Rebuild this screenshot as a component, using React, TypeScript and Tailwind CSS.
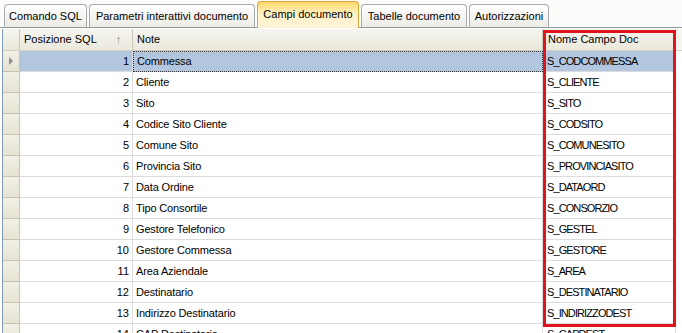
import React from "react";

const rows: [number, string, string][] = [
  [1, "Commessa", "S_CODCOMMESSA"],
  [2, "Cliente", "S_CLIENTE"],
  [3, "Sito", "S_SITO"],
  [4, "Codice Sito Cliente", "S_CODSITO"],
  [5, "Comune Sito", "S_COMUNESITO"],
  [6, "Provincia Sito", "S_PROVINCIASITO"],
  [7, "Data Ordine", "S_DATAORD"],
  [8, "Tipo Consortile", "S_CONSORZIO"],
  [9, "Gestore Telefonico", "S_GESTEL"],
  [10, "Gestore Commessa", "S_GESTORE"],
  [11, "Area Aziendale", "S_AREA"],
  [12, "Destinatario", "S_DESTINATARIO"],
  [13, "Indirizzo Destinatario", "S_INDIRIZZODEST"],
  [14, "CAP Destinatario", "S_CAPDEST"],
];

const tabs = [
  { label: "Comando SQL", w: "w-[83px]" },
  { label: "Parametri interattivi documento", w: "w-[166px]" },
  { label: "Campi documento", w: "w-[102px]", active: true },
  { label: "Tabelle documento", w: "w-[106px]" },
  { label: "Autorizzazioni", w: "w-[80px]" },
];

export default function App() {
  return (
    <div
      className="relative w-[682px] h-[333px] overflow-hidden bg-white text-[11px] text-black"
      style={{ fontFamily: '"Liberation Sans", Arial, sans-serif' }}
    >
      {/* tab strip */}
      <div className="flex items-end h-[28px] pl-[4px] gap-[2px] bg-[#fbfbf9] border-b border-[#919b9c]">
        {tabs.map((t) =>
          t.active ? (
            <div
              key={t.label}
              className={`${t.w} h-[27px] -mb-px flex items-center justify-center rounded-t-[4px] border border-b-0 border-[#d8a93a] bg-gradient-to-b from-[#ffd86b] via-[#fff3c8] to-[#fcf3d8] pb-[1px]`}
            >
              {t.label}
            </div>
          ) : (
            <div
              key={t.label}
              className={`${t.w} h-[23px] flex items-center justify-center rounded-t-[4px] border border-b-0 border-[#a5acad] bg-gradient-to-b from-[#ffffff] to-[#ecebe5] pt-[1px]`}
            >
              {t.label}
            </div>
          )
        )}
      </div>

      {/* grid */}
      <div className="ml-[2px] mt-[1px] border-l border-[#7f9db9] flex flex-col">
        {/* header */}
        <div className="flex h-[22px] bg-gradient-to-b from-[#f5f4ee] to-[#ebe9dc] border-b border-[#d3d0c2]">
          <div className="w-[17px] shrink-0 border-r border-[#cbc7b8]" />
          <div className="w-[113px] shrink-0 flex items-center pl-[4px] border-r border-[#cbc7b8]">
            <span>Posizione SQL</span>
            <span className="ml-[19px] text-[#8a8a8a] text-[11px] font-bold">↑</span>
          </div>
          <div className="w-[410px] shrink-0 flex items-center pl-[4px] border-r border-[#cbc7b8]">
            Note
          </div>
          <div className="w-[133px] shrink-0 flex items-center pl-[5px] border-r border-[#cbc7b8]">
            Nome Campo Doc
          </div>
          <div className="flex-1 bg-[#f6f5f0]" />
        </div>
        {rows.map(([n, note, name], i) => {
          const sel = i === 0;
          return (
            <div key={n} className="flex h-[21px]">
              <div className="w-[17px] shrink-0 flex items-center justify-center bg-gradient-to-b from-[#f2f0e6] to-[#e6e3d3] border-r border-b border-[#c8c4b3]">
                {sel && (
                  <svg width="5" height="8" viewBox="0 0 5 8">
                    <path d="M0 0 L4 4 L0 8 Z" fill="#8d8d8d" />
                  </svg>
                )}
              </div>
              <div
                className={`w-[113px] shrink-0 flex items-center justify-end pr-[3px] border-r border-b border-[#dcdcdc] ${
                  sel ? "bg-[#b3c6df]" : "bg-white"
                }`}
              >
                {n}
              </div>
              <div
                className={`w-[410px] shrink-0 flex items-center pl-[3px] tracking-[-0.15px] ${
                  sel
                    ? "bg-[#b3c6df] border border-dotted border-[#333]"
                    : "bg-white border-r border-b border-[#dcdcdc]"
                }`}
              >
                {note}
              </div>
              <div
                className={`w-[133px] shrink-0 flex items-center pl-[4px] tracking-[-0.9px] border-r border-b border-[#dcdcdc] ${
                  sel ? "bg-[#b3c6df]" : "bg-white"
                }`}
              >
                {name}
              </div>
              <div className="flex-1 bg-white" />
            </div>
          );
        })}
      </div>

      {/* red highlight box */}
      <div className="absolute left-[543px] top-[30px] w-[133px] h-[297px] border-[3px] border-[#e0141c]" />
    </div>
  );
}
